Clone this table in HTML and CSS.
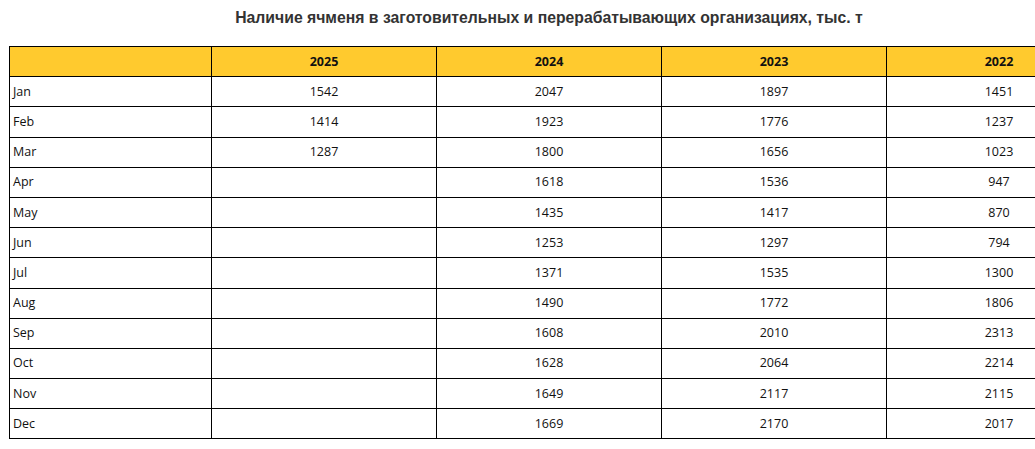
FILE: index.html
```html
<!DOCTYPE html>
<html lang="ru">
<head>
<meta charset="utf-8">
<link rel="stylesheet" href="styles.css">
<title>Наличие ячменя</title>
</head>
<body>
<div class="page">
  <h1 class="title">Наличие ячменя в заготовительных и перерабатывающих организациях, тыс. т</h1>
  <table class="data">
    <colgroup>
      <col class="c-month"><col class="c-year"><col class="c-year"><col class="c-year"><col class="c-year">
    </colgroup>
    <thead>
      <tr><th></th><th>2025</th><th>2024</th><th>2023</th><th>2022</th></tr>
    </thead>
    <tbody>
      <tr><td>Jan</td><td>1542</td><td>2047</td><td>1897</td><td>1451</td></tr>
      <tr><td>Feb</td><td>1414</td><td>1923</td><td>1776</td><td>1237</td></tr>
      <tr><td>Mar</td><td>1287</td><td>1800</td><td>1656</td><td>1023</td></tr>
      <tr><td>Apr</td><td></td><td>1618</td><td>1536</td><td>947</td></tr>
      <tr><td>May</td><td></td><td>1435</td><td>1417</td><td>870</td></tr>
      <tr><td>Jun</td><td></td><td>1253</td><td>1297</td><td>794</td></tr>
      <tr><td>Jul</td><td></td><td>1371</td><td>1535</td><td>1300</td></tr>
      <tr><td>Aug</td><td></td><td>1490</td><td>1772</td><td>1806</td></tr>
      <tr><td>Sep</td><td></td><td>1608</td><td>2010</td><td>2313</td></tr>
      <tr><td>Oct</td><td></td><td>1628</td><td>2064</td><td>2214</td></tr>
      <tr><td>Nov</td><td></td><td>1649</td><td>2117</td><td>2115</td></tr>
      <tr><td>Dec</td><td></td><td>1669</td><td>2170</td><td>2017</td></tr>
    </tbody>
  </table>
</div>
</body>
</html>
```
FILE: styles.css
```css
html, body {
  margin: 0;
  padding: 0;
  background: #ffffff;
  overflow: hidden;
}
.page {
  width: 1035px;
  height: 449px;
  overflow: hidden;
  padding: 0 0 0 9px;
  box-sizing: border-box;
}
.title {
  width: 1080px;
  margin: 0;
  padding: 9px 0 0 0;
  height: 46px;
  box-sizing: border-box;
  text-align: center;
  font-family: "Liberation Sans", Arial, sans-serif;
  font-weight: bold;
  font-size: 15.75px;
  line-height: 18px;
  color: #333333;
}
.data {
  border-collapse: collapse;
  table-layout: fixed;
  width: 1103px;
  font-family: "Open Sans", "Liberation Sans", sans-serif;
  font-size: 12.5px;
  color: #111111;
}
.c-month { width: 202px; }
.c-year { width: 225px; }
.data th, .data td {
  border: 1px solid #000000;
  height: 29.2px;
  padding: 0 3px;
  text-align: center;
  vertical-align: middle;
  line-height: 16px;
  white-space: nowrap;
}
.data th {
  background: #ffca2e;
  font-weight: bold;
}
.data td:first-child {
  text-align: left;
}
```
